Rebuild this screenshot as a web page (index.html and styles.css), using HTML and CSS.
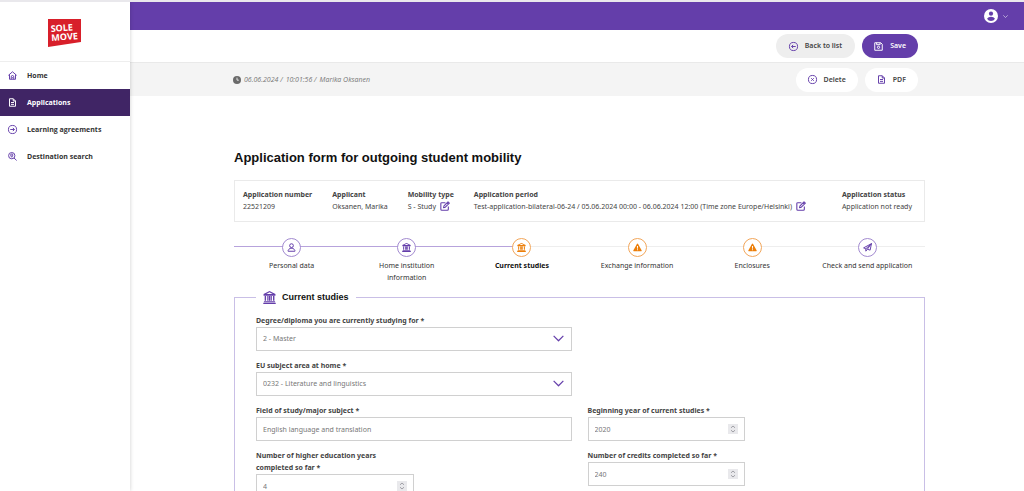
FILE: index.html
```
<!DOCTYPE html>
<html lang="en">
<head>
<meta charset="utf-8">
<title>Application form for outgoing student mobility</title>
<link rel="stylesheet" href="styles.css">
</head>
<body>
<svg class="sprite" aria-hidden="true">
  <symbol id="bank" viewBox="0 0 14 14"><path fill="currentColor" fill-rule="evenodd" d="M7 0 13.4 3.2V5H.6V3.2zM7 1.3 3.6 3.2h6.8zM1.8 5.5h1.5v5H1.8zM4.6 5.5h1.3v5H4.6zM6.4 5.5h1.3v5H6.4zM8.2 5.5h1.3v5H8.2zM10.8 5.5h1.5v5h-1.5zM1 11h12v1H1zM.3 12.6h13.4V14H.3z"/></symbol>
  <symbol id="edit" viewBox="0 0 12 12"><path class="line" d="M6.5 2H2.2Q1 2 1 3.2v6.6Q1 11 2.2 11h6.6Q10 11 10 9.8V6.5M4.3 8l.5-2.2L9.6 1 11.2 2.6 6.4 7.4zM8.4 2.2 10 3.8"/></symbol>
  <symbol id="warning" viewBox="0 0 12 12"><path fill="currentColor" fill-rule="evenodd" d="M6 .8q.5 0 .8.5l4.8 8.8q.3.9-.6.9H1q-.9 0-.6-.9l4.8-8.800q.3-.5.8-.5zM5.300 4l.2 3.600h1L6.700 4zM5.400 8.400v1.200h1.200V8.400z"/></symbol>
  <symbol id="document" viewBox="0 0 12 12"><path class="line" d="M2 1h5l3 3v7H2zM7 1v3h3M4 6h4M4 8.500h4"/></symbol>
  <symbol id="chevron" viewBox="0 0 12 7"><path class="line" d="M.7.7 6 6 11.300.7"/></symbol>
  <symbol id="spinner" viewBox="0 0 10 10"><rect width="10" height="10" fill="#e9e9ec"/><path fill="none" stroke="#a0a0a6" d="M3 3.800 5 2l2 1.800M3 6.200 5 8l2-1.800"/></symbol>
</svg>

<div class="app">
  <aside class="sidebar">
    <div class="brand">
      <svg class="logo" viewBox="0 0 33 28" role="img" aria-label="Sole Move">
        <path fill="#d81f2a" d="M0 0H33V23L0 28z"/>
        <g class="logo-text" transform="rotate(-4 16 14)"><text x="3" y="12">SOLE</text><text x="3" y="21">MOVE</text></g>
      </svg>
    </div>
    <nav class="menu">
      <a class="menu-item" href="#"><svg class="icon" viewBox="0 0 12 12"><path class="line" d="M.5 5.800 6 1l5.500 4.800M2 4.800V11h8V4.800M4.300 11V7.800Q4.300 6 6 6t1.700 1.800V11M5.200 9h1.600"/></svg>Home</a>
      <a class="menu-item active" href="#" aria-current="page"><svg class="icon"><use href="#document"/></svg>Applications</a>
      <a class="menu-item" href="#"><svg class="icon" viewBox="0 0 12 12"><path class="line" d="M6 .6a5.400 5.400 0 1 1 0 10.800A5.400 5.400 0 0 1 6 .6M3 6h5.500M6.400 3.800 8.600 6 6.400 8.200"/></svg>Learning agreements</a>
      <a class="menu-item" href="#"><svg class="icon" viewBox="0 0 12 12"><path class="line" d="M5 .7a4.200 4.200 0 1 1 0 8.400A4.200 4.200 0 0 1 5 .7M8 8l3.500 3.300M5 2.600a1.400 1.400 0 0 1 1.400 1.600Q6.200 5.500 5 7 3.800 5.500 3.600 4.200A1.400 1.400 0 0 1 5 2.600M5 4v.5"/></svg>Destination search</a>
    </nav>
  </aside>

  <div class="page">
    <header class="topbar">
      <button class="account" aria-label="Account menu">
        <svg class="avatar" viewBox="0 0 14 14"><circle cx="7" cy="7" r="7" fill="#fff"/><circle cx="7" cy="4.700" r="2.100" fill="#643eaa"/><path fill="#643eaa" d="M3 9.800Q4.200 7.800 7 7.800t4 2Q9.600 12 7 12T3 9.800"/></svg>
        <svg class="caret"><use href="#chevron"/></svg>
      </button>
    </header>
    <div class="actions">
      <button class="pill grey"><svg class="icon" viewBox="0 0 12 12"><path class="line" d="M6 .6a5.400 5.400 0 1 0 0 10.800A5.400 5.400 0 0 0 6 .6M9 6H3.500M5.600 3.800 3.400 6 5.600 8.200"/></svg>Back to list</button>
      <button class="pill primary"><svg class="icon" viewBox="0 0 12 12"><path class="line" d="M1 1h8l2 2v8H1zM3.500 1v2.600h4.600V1M6 5.600a1.500 1.500 0 1 1 0 3 1.500 1.500 0 0 1 0-3"/></svg>Save</button>
    </div>
    <div class="subbar">
      <p class="stamp"><svg class="clock" viewBox="0 0 10 10"><circle cx="5" cy="5" r="5" fill="#6a6a6a"/><path fill="none" stroke="#fff" d="M5 2v3.200h2.300"/></svg><span>06.06.2024 /</span><span>10:01:56 /</span><span>Marika Oksanen</span></p>
      <div class="subactions">
        <button class="pill white"><svg class="icon" viewBox="0 0 12 12"><path class="line" d="M6 .6a5.400 5.400 0 1 1 0 10.800A5.400 5.400 0 0 1 6 .6M4.300 4.300l3.400 3.400M7.700 4.300 4.300 7.700"/></svg>Delete</button>
        <button class="pill white"><svg class="icon"><use href="#document"/></svg>PDF</button>
      </div>
    </div>

    <main class="content">
      <h1>Application form for outgoing student mobility</h1>

      <dl class="summary">
        <div><dt>Application number</dt><dd>22521209</dd></div>
        <div><dt>Applicant</dt><dd>Oksanen, Marika</dd></div>
        <div><dt>Mobility type</dt><dd>S - Study <button class="edit" aria-label="Edit mobility type"><svg><use href="#edit"/></svg></button></dd></div>
        <div><dt>Application period</dt><dd>Test-application-bilateral-06-24 / 05.06.2024 00:00 - 06.06.2024 12:00 (Time zone Europe/Helsinki) <button class="edit" aria-label="Edit application period"><svg><use href="#edit"/></svg></button></dd></div>
        <div class="status"><dt>Application status</dt><dd>Application not ready</dd></div>
      </dl>

      <ol class="steps">
        <li class="step done"><span class="dot"><svg viewBox="0 0 12 12"><path class="line" d="M6 1a2.500 2.500 0 1 1 0 5 2.500 2.500 0 0 1 0-5M3.800 7h4.400L10.500 10v1h-9v-1z"/></svg></span>Personal data</li>
        <li class="step done"><span class="dot"><svg><use href="#bank"/></svg></span>Home institution information</li>
        <li class="step current" aria-current="step"><span class="dot"><svg><use href="#bank"/></svg></span>Current studies</li>
        <li class="step warn"><span class="dot"><svg><use href="#warning"/></svg></span>Exchange information</li>
        <li class="step warn"><span class="dot"><svg><use href="#warning"/></svg></span>Enclosures</li>
        <li class="step"><span class="dot"><svg viewBox="0 0 12 12"><path class="line" d="M11.300.800.800 6.500l3 1.200L11.300.800 9.500 9.500 5.800 8.300 11.300.800M3.800 7.700v3.200l2-2.600"/></svg></span>Check and send application</li>
      </ol>

      <fieldset class="panel">
        <legend><svg><use href="#bank"/></svg>Current studies</legend>
        <div class="fields">
          <div class="field row">
            <label for="degree">Degree/diploma you are currently studying for *</label>
            <div class="control"><select id="degree"><option>2 - Master</option></select><svg class="arrow"><use href="#chevron"/></svg></div>
          </div>
          <div class="field row">
            <label for="area">EU subject area at home *</label>
            <div class="control"><select id="area"><option>0232 - Literature and linguistics</option></select><svg class="arrow"><use href="#chevron"/></svg></div>
          </div>
          <div class="field">
            <label for="major">Field of study/major subject *</label>
            <div class="control"><input id="major" type="text" value="English language and translation"></div>
          </div>
          <div class="field half">
            <label for="begin">Beginning year of current studies *</label>
            <div class="control"><input id="begin" type="number" value="2020"><svg class="spin"><use href="#spinner"/></svg></div>
          </div>
          <div class="field half">
            <label for="years">Number of higher education years completed so far *</label>
            <div class="control"><input id="years" type="number" value="4"><svg class="spin"><use href="#spinner"/></svg></div>
          </div>
          <div class="field half">
            <label for="credits">Number of credits completed so far *</label>
            <div class="control"><input id="credits" type="number" value="240"><svg class="spin"><use href="#spinner"/></svg></div>
          </div>
        </div>
      </fieldset>
    </main>
  </div>
</div>
</body>
</html>
```
FILE: styles.css
```
* { box-sizing: border-box; }

body {
  margin: 0;
  font: 7px/12px "Noto Sans", "Open Sans", sans-serif;
  color: #444;
  background: #fff;
}

button, input, select { font: inherit; color: inherit; margin: 0; }
button { border: 0; padding: 0; background: none; cursor: pointer; }
svg { display: block; flex: none; overflow: visible; }
.line { fill: none; stroke: currentColor; stroke-width: 1.3; stroke-linejoin: round; }
.sprite { position: absolute; width: 0; height: 0; }
.icon { width: 9px; height: 9px; color: #643eaa; }

.app {
  display: flex;
  height: 100vh;
  overflow: hidden;
  border-top: 2px solid #e9e8ec;
}

/* Sidebar */
.sidebar {
  flex: 0 0 130px;
  z-index: 1;
  background: #fff;
  box-shadow: 0 0 4px #0003;
}
.brand {
  display: flex;
  height: 60px;
  padding: 17px 0 0 48px;
  border-bottom: 1px solid #eee;
}
.logo { width: 33px; height: 28px; }
.logo-text { font: 700 9px "Open Sans", sans-serif; fill: #fff; }
.menu-item {
  display: flex;
  align-items: center;
  gap: 10px;
  height: 27px;
  padding-left: 8px;
  font-family: "Open Sans", sans-serif;
  font-weight: 700;
  color: #333;
  text-decoration: none;
}
.menu-item.active, .menu-item.active .icon { color: #fff; }
.menu-item.active { background: #402565; }

/* Header bars */
.page { flex: 1; min-width: 0; }
.topbar {
  display: flex;
  justify-content: flex-end;
  height: 28px;
  padding-right: 16px;
  background: #643eaa;
}
.account { display: flex; align-items: center; gap: 5px; color: #fff; }
.avatar { width: 14px; height: 14px; }
.caret { width: 5px; height: 3px; }
.actions {
  display: flex;
  justify-content: flex-end;
  align-items: center;
  gap: 7px;
  height: 32px;
  padding-right: 106px;
}
.subbar {
  display: flex;
  justify-content: space-between;
  align-items: center;
  height: 34px;
  padding: 0 106px 0 103px;
  background: #f4f4f4;
  border-top: 1px solid #e9e9e9;
}
.pill {
  display: flex;
  align-items: center;
  gap: 7px;
  height: 24px;
  padding: 0 12px;
  border-radius: 12px;
  font-weight: 600;
}
.grey { padding: 0 13px; background: #eee; }
.primary { background: #643eaa; color: #fff; }
.primary .icon { color: #fff; }
.white { background: #fff; }
.subactions { display: flex; gap: 7px; }
.stamp {
  display: flex;
  align-items: center;
  gap: 3px;
  margin: 0;
  font-family: "Open Sans", sans-serif;
  font-style: italic;
  color: #777;
}
.clock { width: 8px; height: 8px; }

/* Content */
.content { padding: 53px 99px 0 104px; }
h1 {
  margin: 0;
  font: 700 13px/18px "Liberation Sans", Arial, sans-serif;
  color: #111;
}
.summary {
  display: flex;
  gap: 20px;
  height: 42px;
  margin: 13px 0 0;
  padding: 8px 12px 0 8px;
  border: 1px solid #eaeaea;
  white-space: nowrap;
}
.summary dt { font-weight: 700; }
.summary dd { display: flex; gap: 4px; margin: 0; }
.status { margin-left: auto; }
.edit, .edit svg { width: 10px; height: 10px; color: #643eaa; }

/* Progress steps */
.steps {
  display: grid;
  grid-template-columns: repeat(6, 1fr);
  margin: 16px 0 0;
  padding: 0;
  list-style: none;
}
.step {
  position: relative;
  padding: 0 28px;
  text-align: center;
  color: #333;
}
.step:nth-child(n+3) { padding: 0; }
.step::before {
  content: "";
  position: absolute;
  inset: 8px 0 auto;
  height: 1px;
  background: #eee;
}
.step.done::before { background: #b7a3dc; }
.step.current::before { background: linear-gradient(90deg, #b7a3dc 50%, #eee 50%); }
.dot {
  position: relative;
  display: grid;
  place-items: center;
  width: 19px;
  height: 19px;
  margin: 0 auto 3px;
  border: 1px solid #a28ad0;
  border-radius: 50%;
  background: #fff;
  color: #643eaa;
}
.dot svg { width: 9px; height: 9px; }
.current .dot, .warn .dot { border-color: #f2a65a; color: #ec7f0b; }
.step.current { font-weight: 700; color: #111; }

/* Form */
.panel {
  margin: 6px 0 0;
  padding: 11px 21px 20px;
  border: 1px solid #c9bfe6;
  min-width: 0;
}
.panel legend {
  display: flex;
  align-items: center;
  gap: 6px;
  padding: 0 7px;
  font: 700 9px/14px "Liberation Sans", Arial, sans-serif;
  color: #111;
}
.panel legend svg { width: 13px; height: 13px; color: #643eaa; }
.fields {
  display: grid;
  grid-template-columns: 1fr 1fr;
  align-items: start;
  gap: 9px 16px;
}
.row { grid-column: 1 / -1; width: calc(50% - 8px); }
.half { width: 50%; }
.field label { display: block; font-weight: 700; }
.half label { padding-right: 8px; }
.control { position: relative; }
.control input, .control select {
  display: block;
  width: 100%;
  height: 24px;
  padding: 0 6px;
  border: 1px solid #d0d0d0;
  border-radius: 0;
  background: #fff;
  color: #777;
  appearance: none;
}
input::-webkit-inner-spin-button { appearance: none; }
.arrow {
  position: absolute;
  top: 8px;
  right: 8px;
  width: 11px;
  height: 7px;
  color: #643eaa;
  pointer-events: none;
}
.spin {
  position: absolute;
  top: 7px;
  right: 7px;
  width: 10px;
  height: 10px;
  pointer-events: none;
}
```
